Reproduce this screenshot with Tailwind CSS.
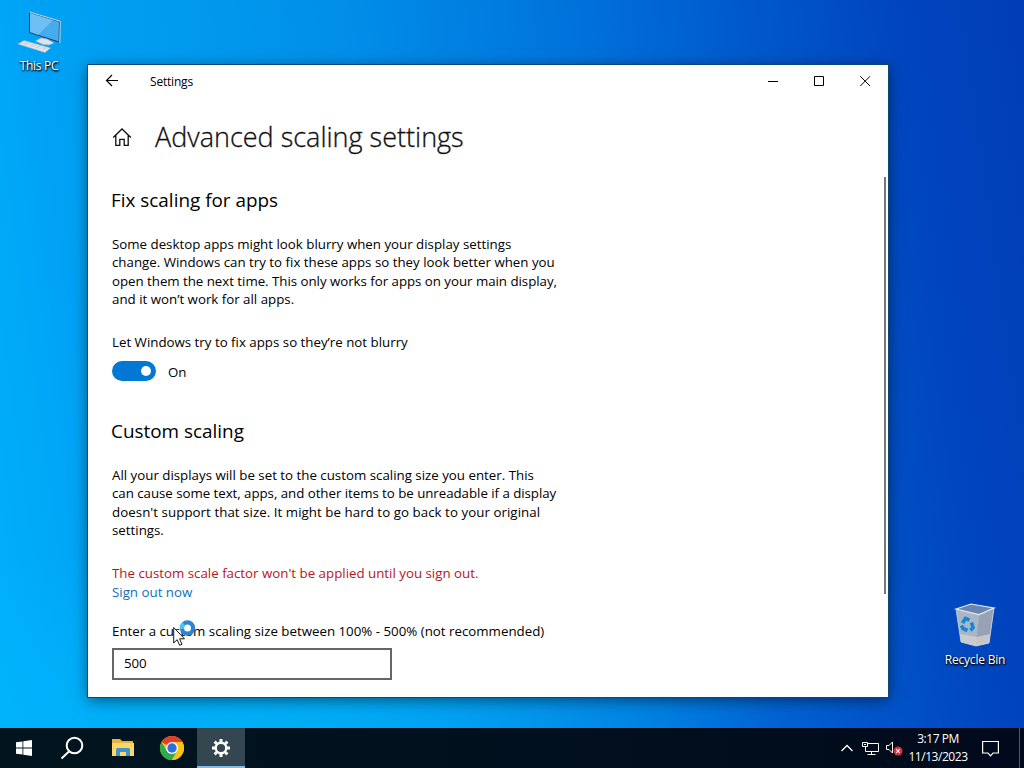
<!DOCTYPE html>
<html lang="en">
    <head>
        <meta charset="UTF-8">
        <meta name="viewport" content="width=device-width, initial-scale=1.0">
        <title>Settings</title>
        <script src="https://cdn.jsdelivr.net/npm/@tailwindcss/browser@4"></script>
    </head>
    <body class="w-[1024px] h-[768px] overflow-hidden font-['Open_Sans',sans-serif] text-black">
        <div class="relative flex flex-col w-full h-full bg-[radial-gradient(ellipse_520px_200px_at_260px_740px,rgba(0,184,250,0.75),rgba(0,184,250,0)),linear-gradient(82deg,#00b2fd_0%,#00a2f5_12%,#009aee_26%,#008ee9_40%,#0074dc_59%,#005bcd_74%,#0046bf_88%,#003db6_100%)]">

            <!-- desktop icons -->
            <div class="absolute left-0 top-2 w-[78px] flex flex-col items-center">
                <svg width="46" height="48" viewBox="0 0 46 48">
                    <path d="M13.500 4.500 43.500 13.500 43 34 13.500 24.500Z" fill="#45acee" stroke="#1e3d55"/>
                    <path d="M14 5 37 12 22 27 14 24Z" fill="#8fd0f8" opacity=".55"/>
                    <path d="M13.500 4 44.300 13.200 43.800 35" fill="none" stroke="#cfd8dc"/>
                    <path d="M19.500 33 25 30 31 31 38 35 33 37 27 36.500Z" fill="#dde3ea" stroke="#9fb0bf" stroke-width=".5"/>
                    <path d="M2 36 8 32.500 34.500 40 29 44.500Z" fill="#eceef4" stroke="#9fb0bf" stroke-width=".6"/>
                    <path d="M5 35 31.500 42.500M7 33.800 33 41.200M12 34 8 37.500M18 35.500 14 39.500M24 37 20 41M30 39 25.500 43" stroke="#b3bfcb" stroke-width=".6"/>
                </svg>
                <span class="mt-[2px] text-[12px] leading-4 tracking-[-0.3px] text-white [text-shadow:1px_1px_2px_#000,0_1px_2px_#000]">This PC</span>
            </div>
            <div class="absolute left-[936px] top-[600px] w-[78px] flex flex-col items-center">
                <svg width="46" height="50" viewBox="0 0 46 50">
                    <path d="M4 9 27 14.500 42 8 37 43 24 46 9 42Z" fill="#a9b6c8"/>
                    <path d="M27 14.500 42 8 37 43 24 46Z" fill="#97a2b4"/>
                    <path d="M8 34 25 37 38 34 37 43 24 46 9 42Z" fill="#d5d2cf" opacity=".75"/>
                    <path d="M4 9 19 4 42 8 27 14.500Z" fill="#6785ae" stroke="#e6ecf3" stroke-width="1.200"/>
                    <path d="M4 9 9 42 24 46 37 43 42 8" fill="none" stroke="#cfd8e3" stroke-width=".8"/>
                    <g fill="none" stroke="#1787d4" stroke-width="3.600">
                        <path d="M10.500 23 13.500 18.500 17.500 20"/>
                        <path d="M19.500 22.500 21 27.500 18.500 30.500"/>
                        <path d="M15.500 30.500 11 28.500 9.500 25.500"/>
                    </g>
                </svg>
                <span class="mt-[2px] text-[12px] leading-4 tracking-[-0.2px] text-white whitespace-nowrap [text-shadow:1px_1px_2px_#000,0_1px_2px_#000]">Recycle Bin</span>
            </div>

            <main class="flex-1 pl-[88px] pt-[65px]">
                <div class="relative w-[800px] h-[632px] bg-white outline outline-[#0b4874] shadow-[0_3px_14px_rgba(0,0,0,0.5)] flex flex-col">
                    <div class="flex items-center h-8">
                        <svg class="ml-[17px]" width="14" height="14" viewBox="0 0 14 14" fill="none" stroke="#000" stroke-width="1.2"><path d="M13 6.500H1.500M7 1 1.500 6.500 7 12"/></svg>
                        <span class="ml-[31px] pt-[2px] text-[12px] tracking-[-0.2px]">Settings</span>
                        <div class="ml-auto flex h-8">
                            <span class="w-[46px] flex items-center justify-center"><svg width="11" height="11" viewBox="0 0 11 11"><path d="M0 5.5H10" stroke="#000"/></svg></span>
                            <span class="w-[46px] flex items-center justify-center"><svg width="11" height="11" viewBox="0 0 11 11"><path d="M.5.5H9.500V9.500H.5Z" fill="none" stroke="#000"/></svg></span>
                            <span class="w-[46px] flex items-center justify-center"><svg width="11" height="11" viewBox="0 0 11 11"><path d="M.3.3 10 10M10 .3.3 10" stroke="#000"/></svg></span>
                        </div>
                    </div>

                    <div class="pl-6 pt-[22px] flex items-center">
                        <svg width="20" height="20" viewBox="0 0 20 20" fill="none" stroke="#111" stroke-width="1.300"><path d="M1.200 10.500 10 2l8.800 8.500M3.800 8.500V18.300H7.800V12.300H12.200V18.300H16.200V8.500"/></svg>
                        <h1 class="ml-[23px] text-[27px] leading-9 font-light text-[#111] [-webkit-text-stroke:0.3px_#111]">Advanced scaling settings</h1>
                    </div>

                    <div class="pl-6 text-[13.300px] leading-[18.400px] whitespace-nowrap">
                        <h2 class="mt-[31px] -ml-px text-[18.900px] leading-7">Fix scaling for apps</h2>
                        <p class="mt-[21px]">Some desktop apps might look blurry when your display settings<br>change. Windows can try to fix these apps so they look better when you<br><span class="tracking-[-0.03px]">open them the next time. This only works for apps on your main display,</span><br>and it won’t work for all apps.</p>
                        <p class="mt-6">Let Windows try to fix apps so they’re not blurry</p>
                        <div class="mt-[10px] flex items-center">
                            <span class="w-11 h-5 rounded-full bg-[#0078d4] flex items-center justify-end pr-[5px]"><span class="size-[10px] rounded-full bg-white"></span></span>
                            <span class="ml-3 pt-[2px]">On</span>
                        </div>
                        <h2 class="mt-9 -ml-px text-[18.900px] leading-7">Custom scaling</h2>
                        <p class="mt-[20.600px]">All your displays will be set to the custom scaling size you enter. This<br><span class="tracking-[-0.04px]">can cause some text, apps, and other items to be unreadable if a display</span><br><span class="tracking-[0.05px]">doesn't support that size. It might be hard to go back to your original</span><br>settings.</p>
                        <p class="mt-[24.400px] text-[#b91521]">The custom scale factor won't be applied until you sign out.</p>
                        <p class="mt-px text-[#0c72b8]">Sign out now</p>
                        <p class="mt-5">Enter a custom scaling size between 100% - 500% (not recommended)</p>
                        <div class="mt-2 w-[280px] h-8 border-2 border-[#666] flex items-center pl-[10px] pb-[2px] tracking-[-0.1px]">500</div>
                    </div>
                    <div class="absolute right-[2px] top-28 w-[2px] h-[417px] bg-[#767676]"></div>
                </div>
            </main>

            <!-- taskbar -->
            <footer class="h-10 flex items-center bg-linear-to-r from-[#02151f] to-[#000a1c] text-white">
                <div class="w-12 flex justify-center">
                    <svg width="16" height="16" viewBox="0 0 16 16" fill="#fff"><path d="M0 2.300 6.500 1.400V7.500H0ZM7.300 1.300 16 0V7.500H7.300ZM0 8.400H6.500V14.600L0 13.700ZM7.300 8.400H16V16L7.300 14.700Z"/></svg>
                </div>
                <div class="w-12 flex justify-center">
                    <svg width="24" height="24" viewBox="0 0 24 24" fill="none" stroke="#fff" stroke-width="2"><circle cx="14.500" cy="9.500" r="7.800"/><path d="M9 15.500 1.500 22.500"/></svg>
                </div>
                <div class="w-[53px] flex justify-center">
                    <svg width="22" height="18" viewBox="0 0 22 18">
                        <path d="M0 0H8L10 2H21V17H0Z" fill="#e8b33a"/>
                        <path d="M0 4H22V17H0Z" fill="#fcd669"/>
                        <path d="M4 17V10.500Q4 9 5.500 9H16.500Q18 9 18 10.500V17H14V13H8V17Z" fill="#4193c8"/>
                    </svg>
                </div>
                <div class="w-12 pr-[2px] flex justify-center">
                    <svg width="24" height="24" viewBox="0 0 24 24">
                        <circle cx="12" cy="12" r="12" fill="#fbc116"/>
                        <path d="M12 12 1.600 6A12 12 0 0 1 22.400 6Z" fill="#e33b2e"/>
                        <path d="M1.600 6A12 12 0 0 0 12 24L17.200 15 12 12 6.800 15Z" fill="#2da94f"/>
                        <path d="M12 6H22.400A12 12 0 0 1 12 24L17.200 15Z" fill="#fbc116"/>
                        <circle cx="12" cy="12" r="6" fill="#fff"/>
                        <circle cx="12" cy="12" r="4.700" fill="#2d6fe0"/>
                    </svg>
                </div>
                <div class="w-12 h-10 flex items-center justify-center bg-[#344750] border-b-2 border-[#80bdec] pt-[2px]">
                    <svg width="20" height="20" viewBox="-10 -10 20 20" fill="none" stroke="#fff">
                        <circle r="5.300" stroke-width="2.400"/>
                        <path d="M0-6V-9M0 6V9M-6 0H-9M6 0H9M-4.300-4.300-6.400-6.400M4.300 4.300 6.400 6.400M4.300-4.300 6.400-6.400M-4.300 4.300-6.400 6.400" stroke-width="3"/>
                    </svg>
                </div>

                <div class="ml-auto flex items-center h-10">
                    <svg width="12" height="8" viewBox="0 0 12 8" fill="none" stroke="#fff" stroke-width="1.300"><path d="M.5 7 6 1.500 11.500 7"/></svg>
                    <svg class="ml-[9px]" width="17" height="15" viewBox="0 0 17 15" fill="none" stroke="#fff"><path d="M6 2.500H16.500V10.500H3.500V6M9.500 10.500V13.500M5.500 13.500H13.500M.5 1.500H5.500V5.500H.5ZM2 3.500H4"/></svg>
                    <svg class="ml-[7px]" width="17" height="16" viewBox="0 0 17 16" fill="none" stroke="#fff"><path d="M6.500 2V13L3 9.500H.5V5.500H3Z"/><circle cx="12" cy="11" r="4.500" fill="#d9303a" stroke="none"/><path d="M10.200 9.200 13.800 12.800M13.800 9.200 10.200 12.800" stroke-width="1.100"/></svg>
                    <div class="ml-[4px] w-[62px] text-center text-[12px] leading-[18px] tracking-[-0.45px] whitespace-nowrap pb-px">
                        <div>3:17 PM</div>
                        <div>11/13/2023</div>
                    </div>
                    <svg class="ml-[13px]" width="17" height="17" viewBox="0 0 17 17" fill="none" stroke="#fff" stroke-width="1.200"><path d="M.6 1.500H16.400V13H11L8.500 15.800 6 13H.6Z"/></svg>
                    <div class="ml-5 mr-1 w-px h-10 bg-[#4d5866]"></div>
                </div>
            </footer>

            <!-- pointer with busy ring -->
            <svg class="absolute left-[173px] top-[619px]" width="24" height="30" viewBox="0 0 24 30">
                <circle cx="14.500" cy="9" r="5.600" fill="#f4fbff" stroke="#2f83cf" stroke-width="4.200"/>
                <path d="M9 10A5.600 5.600 0 0 1 11 4.800" fill="none" stroke="#4ec3ec" stroke-width="4.200"/>
                <path d="M.7 8.500V24L4.200 20.700 6.600 26.300 9 25.300 6.600 19.800H11.500Z" fill="#fff" stroke="#000" stroke-width=".9"/>
            </svg>
        </div>
    </body>
</html>
